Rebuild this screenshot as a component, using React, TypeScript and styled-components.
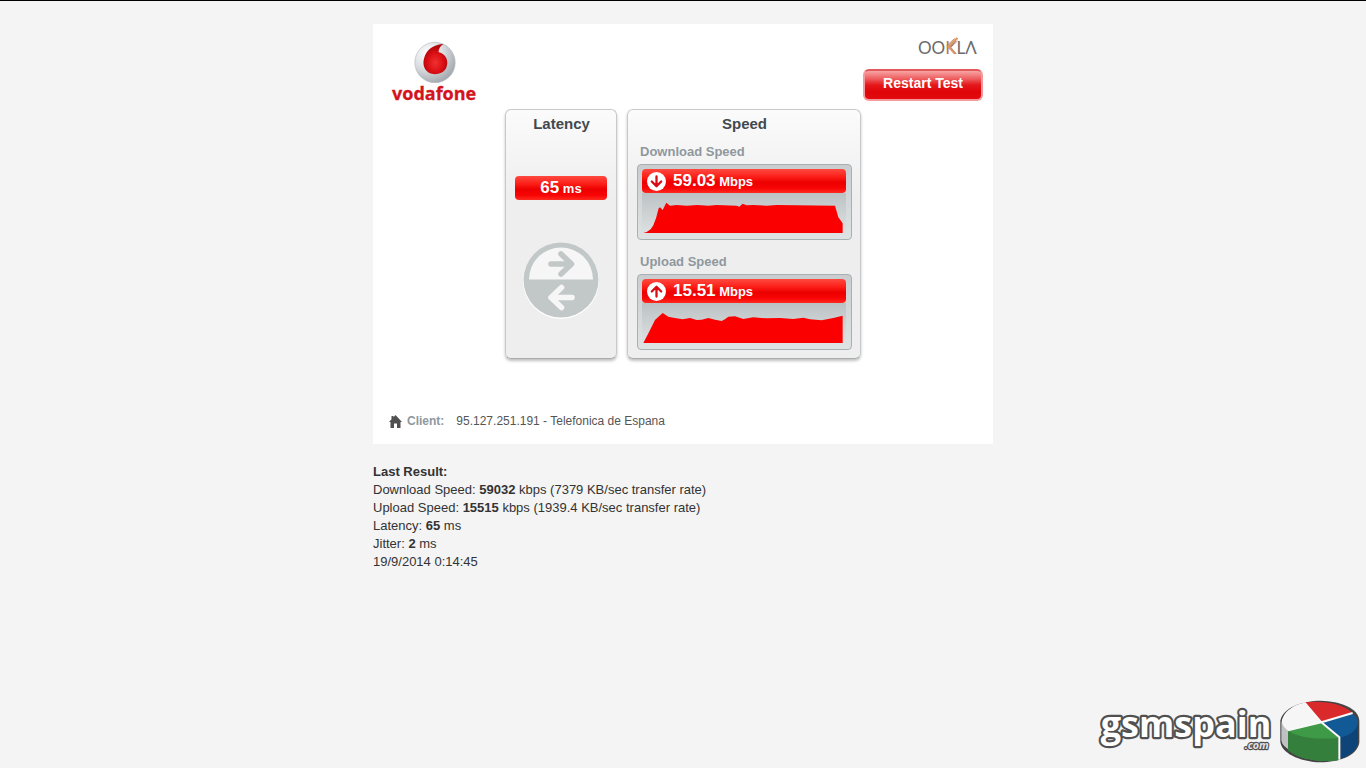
import React from "react";
import styled, { createGlobalStyle } from "styled-components";

const GlobalStyle = createGlobalStyle`
  *, *::before, *::after { box-sizing: border-box; }
  body {
    margin: 0;
    background: #f4f4f4;
    color: #333;
    font: 13px/18px "Liberation Sans", Arial, Helvetica, sans-serif;
  }
`;

const Page = styled.div`
  display: flex;
  flex-direction: column;
  min-height: 100vh;
  border-top: 1px solid #000;
`;

const Content = styled.main`
  width: 100%;
  max-width: 620px;
  margin: 0 auto;
  padding-top: 23px;
`;

const Card = styled.section`
  display: flex;
  flex-direction: column;
  min-height: 420px;
  background: #fff;
`;

const Header = styled.header`
  display: flex;
  justify-content: space-between;
  padding: 12px 10px 0 16px;
`;

const Actions = styled.div`
  display: flex;
  flex-direction: column;
  align-items: flex-end;
`;

const OoklaLogo = styled.svg`
  width: 64px;
  height: 24px;
  margin-right: 4px;
`;

const VodafoneLogo = styled.svg`
  width: 92px;
  height: 73px;
`;

const RestartButton = styled.button`
  width: 120px;
  height: 32px;
  margin-top: 9px;
  padding: 0 0 4px;
  border: 2px solid #f59a9c;
  border-top-color: #e2585b;
  border-radius: 6px;
  background: linear-gradient(#f7a5a5 0%, #ee5c5e 28%, #e5171b 50%, #df0408 75%, #e30b10 100%);
  color: #fff;
  font: bold 14px/18px "Liberation Sans", Arial, sans-serif;
  white-space: nowrap;
`;

const Panels = styled.div`
  display: flex;
  flex-wrap: wrap;
  justify-content: center;
  gap: 10px;
`;

const Panel = styled.section<{ $width: number }>`
  display: flex;
  flex-direction: column;
  width: ${(p) => p.$width}px;
  padding: 4px 8px 8px 9px;
  border: 1px solid #c6cacb;
  border-bottom-color: #a9adae;
  border-radius: 6px;
  background: linear-gradient(#fbfbfb, #eeeeee 36%);
  box-shadow: 0 2px 3px rgba(0, 0, 0, 0.25);
`;

const PanelTitle = styled.h2`
  margin: 0;
  color: #414950;
  font-size: 15px;
  line-height: 20px;
  text-align: center;
`;

const ReadingLabel = styled.h3`
  margin: 9px 3px 3px;
  color: #8f989e;
  font-size: 13px;
  line-height: 18px;

  div + & {
    margin-top: 13px;
  }
`;

const Bar = styled.div<{ $centered?: boolean }>`
  display: flex;
  align-items: center;
  justify-content: ${(p) => (p.$centered ? "center" : "flex-start")};
  gap: 7px;
  height: 24px;
  padding: 0 5px;
  border-radius: 4px;
  background: linear-gradient(#ff4a40 0%, #fb1c16 35%, #ec0000 55%, #f80505 80%, #ff2a20 100%);
  color: #fff;
  font-size: 13px;
  font-weight: bold;
`;

const Amount = styled.span`
  font-size: 17px;
`;

const LatencyBody = styled.div`
  display: flex;
  flex-direction: column;
  gap: 40px;
  padding: 42px 1px 0 0;
`;

const PingIcon = styled.svg`
  width: 80px;
  height: 80px;
  align-self: center;
`;

const Meter = styled.div`
  padding: 4px 5px 4px 4px;
  border: 1px solid #a9b0b2;
  border-radius: 4px;
  background: linear-gradient(#c9cdcf, #dfe2e3);
`;

const Plot = styled.svg`
  display: block;
  width: 100%;
  height: 42px;
  background: linear-gradient(#bcc2c4, #dfe2e3);
`;

const BarIcon = styled.svg`
  width: 19px;
  height: 19px;
`;

const Client = styled.div`
  display: flex;
  align-items: center;
  margin-top: auto;
  padding: 0 16px 14px;
  color: #555;
  font-size: 12px;
`;

const HouseIcon = styled.svg`
  width: 13px;
  height: 13px;
  margin-right: 5px;
`;

const ClientLabel = styled.strong`
  margin-right: 12px;
  color: #8f989e;
`;

const Results = styled.section`
  padding-top: 19px;
`;

const ResultLine = styled.p`
  margin: 0;
`;

const Footer = styled.footer`
  display: flex;
  justify-content: flex-end;
  margin-top: auto;
`;

const SiteLogo = styled.svg`
  width: 276px;
  height: 78px;
`;

function Vodafone() {
  return (
    <VodafoneLogo viewBox="0 0 92 73" role="img" aria-label="vodafone">
      <defs>
        <radialGradient id="silver" cx="32%" cy="28%" r="75%">
          <stop offset="0" stopColor="#fff" />
          <stop offset="0.5" stopColor="#dcdfe2" />
          <stop offset="1" stopColor="#a4aab0" />
        </radialGradient>
        <radialGradient id="drop" cx="50%" cy="62%" r="52%">
          <stop offset="0" stopColor="#f03030" />
          <stop offset="0.6" stopColor="#dc1015" />
          <stop offset="1" stopColor="#b5080c" />
        </radialGradient>
      </defs>
      <circle cx="46" cy="26.5" r="20.2" fill="url(#silver)" stroke="#b4b9be" strokeWidth="0.6" />
      <path
        d="M54.500 8C46 8.200 39 12.500 36 19.500C33 27 34.500 33 39.500 36.500C45.500 39.800 53.500 38 57 32.500C60.300 25.500 57.500 18.200 49.500 16C49.800 12.500 51.500 9.800 54.500 8z"
        fill="url(#drop)"
      />
      <text x="3" y="64" fill="#d2141d" stroke="#d2141d" strokeWidth="0.300" fontFamily="Open Sans, sans-serif" fontWeight="700" fontSize="18">
        vodafone
      </text>
    </VodafoneLogo>
  );
}

function Ookla() {
  return (
    <OoklaLogo viewBox="0 0 64 24" role="img" aria-label="Ookla">
      <text x="3" y="18" fill="#6b6b6b" fontFamily="Lato, sans-serif" fontSize="17">
        OO<tspan fill="#a87c60">K</tspan>LΛ
      </text>
      <g fill="none">
        <path d="M42.500 2L33.500 10.500L40 17.500" stroke="#dc9766" strokeWidth="2.400" />
        <path d="M39.500 2.500L31.500 10" stroke="#b5744a" strokeWidth="0.800" />
        <path d="M42.500 5L36.500 10.500" stroke="#8d5a3c" strokeWidth="0.600" />
      </g>
    </OoklaLogo>
  );
}

function DirectionIcon({ up = false }: { up?: boolean }) {
  return (
    <BarIcon viewBox="0 0 19 19" aria-hidden="true">
      <circle cx="9.500" cy="9.500" r="9.500" fill="#fff" />
      <path
        d={up ? "M9.500 14.500V5M4.800 9.500L9.500 4.800L14.200 9.500" : "M9.500 4.500V14M4.800 9.500L9.500 14.200L14.200 9.500"}
        fill="none"
        stroke="#d90c14"
        strokeWidth="2.300"
        strokeLinecap="round"
        strokeLinejoin="round"
      />
    </BarIcon>
  );
}

const downloadCurve =
  "70,399 80,396 92,388 100,376 108,355 116,325 120,322 128,330 139,308 150,317 170,315 200,317 232,315 265,317 290,315 350,317 358,320 368,311 380,316 400,315 440,317 470,315 645,317 655,352 668,370 668,399";
const uploadCurve =
  "70,309 86,278 105,240 118,228 128,219 145,230 160,233 188,238 210,234 230,240 245,239 265,234 285,239 305,243 315,238 325,230 345,229 370,237 400,232 440,235 480,234 520,237 550,233 570,238 605,241 640,234 668,227 668,309";

function SpeedMeter({ value, curve, viewBox, up }: { value: string; curve: string; viewBox: string; up?: boolean }) {
  return (
    <Meter>
      <Bar>
        <DirectionIcon up={up} />
        <span>
          <Amount>{value}</Amount> Mbps
        </span>
      </Bar>
      <Plot viewBox={viewBox} preserveAspectRatio="none" aria-hidden="true">
        <polygon points={curve} fill="#fa0000" />
      </Plot>
    </Meter>
  );
}

export default function App() {
  return (
    <Page>
      <GlobalStyle />
      <Content>
        <Card>
          <Header>
            <Vodafone />
            <Actions>
              <Ookla />
              <RestartButton type="button">Restart Test</RestartButton>
            </Actions>
          </Header>
          <Panels>
            <Panel $width={112}>
              <PanelTitle>Latency</PanelTitle>
              <LatencyBody>
                <Bar $centered>
                  <span>
                    <Amount>65</Amount> ms
                  </span>
                </Bar>
                <PingIcon viewBox="0 0 80 80" aria-hidden="true">
                  <circle cx="40" cy="41" r="38" fill="#fff" />
                  <circle cx="40" cy="40" r="37.500" fill="#c2c8c8" />
                  <path d="M8 39.500a32 32 0 0 1 64 0z" fill="#f6f6f6" />
                  <g fill="none" strokeWidth="5.600" strokeLinecap="round" strokeLinejoin="round">
                    <path d="M30 24H50M40 14L50.500 24L40 34" stroke="#c2c8c8" />
                    <path d="M51 57.500H31M40.500 47.500L30 57.500L40.500 67.500" stroke="#f6f6f6" />
                  </g>
                </PingIcon>
              </LatencyBody>
            </Panel>
            <Panel $width={234}>
              <PanelTitle>Speed</PanelTitle>
              <ReadingLabel>Download Speed</ReadingLabel>
              <SpeedMeter value="59.03" curve={downloadCurve} viewBox="66 279 612 126" />
              <ReadingLabel>Upload Speed</ReadingLabel>
              <SpeedMeter value="15.51" curve={uploadCurve} viewBox="66 189 612 126" up />
            </Panel>
          </Panels>
          <Client>
            <HouseIcon viewBox="0 0 13 13" aria-hidden="true">
              <path d="M6.500 0L13 7H11.500V13H8V8.500H5V13H1.500V7H0L2.500 4.200V1H4.500V2.200z" fill="#505050" />
            </HouseIcon>
            <ClientLabel>Client:</ClientLabel>
            <span>95.127.251.191 - Telefonica de Espana</span>
          </Client>
        </Card>
        <Results>
          <ResultLine>
            <b>Last Result:</b>
          </ResultLine>
          <ResultLine>
            Download Speed: <b>59032</b> kbps (7379 KB/sec transfer rate)
          </ResultLine>
          <ResultLine>
            Upload Speed: <b>15515</b> kbps (1939.4 KB/sec transfer rate)
          </ResultLine>
          <ResultLine>
            Latency: <b>65</b> ms
          </ResultLine>
          <ResultLine>
            Jitter: <b>2</b> ms
          </ResultLine>
          <ResultLine>19/9/2014 0:14:45</ResultLine>
        </Results>
      </Content>
      <Footer>
        <SiteLogo viewBox="0 0 828 234" role="img" aria-label="gsmspain.com">
          <g fontFamily="Open Sans, sans-serif" fontWeight="700" strokeLinejoin="round" paintOrder="stroke">
            <text x="32" y="142" fontSize="108" fill="#fff" stroke="#505050" strokeWidth="13">
              gsmspain
            </text>
            <text x="464" y="178" fontSize="32" fill="#e4e4e4" stroke="#505050" strokeWidth="7" fontStyle="italic">
              .com
            </text>
          </g>
          <path
            d="M571 92C578 52 640 32 692 32C750 33 806 54 808 92V158C800 198 748 216 690 217C625 214 574 188 571 155z"
            fill="#444"
          />
          <path d="M575 96C580 58 625 40 643 38L693 97L594 122V176C580 167 575 158 575 150z" fill="#f6f6f6" />
          <path d="M575 96Q580 112 594 122V176C580 167 575 158 575 150z" fill="#bfc1c2" />
          <path d="M643 37C700 30 762 42 786 68L693 95z" fill="#d9292b" />
          <path d="M788 72Q804 84 804 96V158C798 184 775 198 752 206V142L697 98z" fill="#125a96" />
          <path d="M804 98C800 124 775 137 752 142V206C775 198 798 184 804 158z" fill="#0e4478" />
          <path d="M594 120L693 98L745 142V210C690 218 625 208 594 180z" fill="#3f9a48" />
          <path d="M594 122Q640 152 745 144V210C690 218 625 208 594 180z" fill="#357f3c" />
          <path d="M643 37L694 97L788 69M694 97L748 142V209M694 97L594 121" fill="none" stroke="#f8f8f8" strokeWidth="6" />
        </SiteLogo>
      </Footer>
    </Page>
  );
}
